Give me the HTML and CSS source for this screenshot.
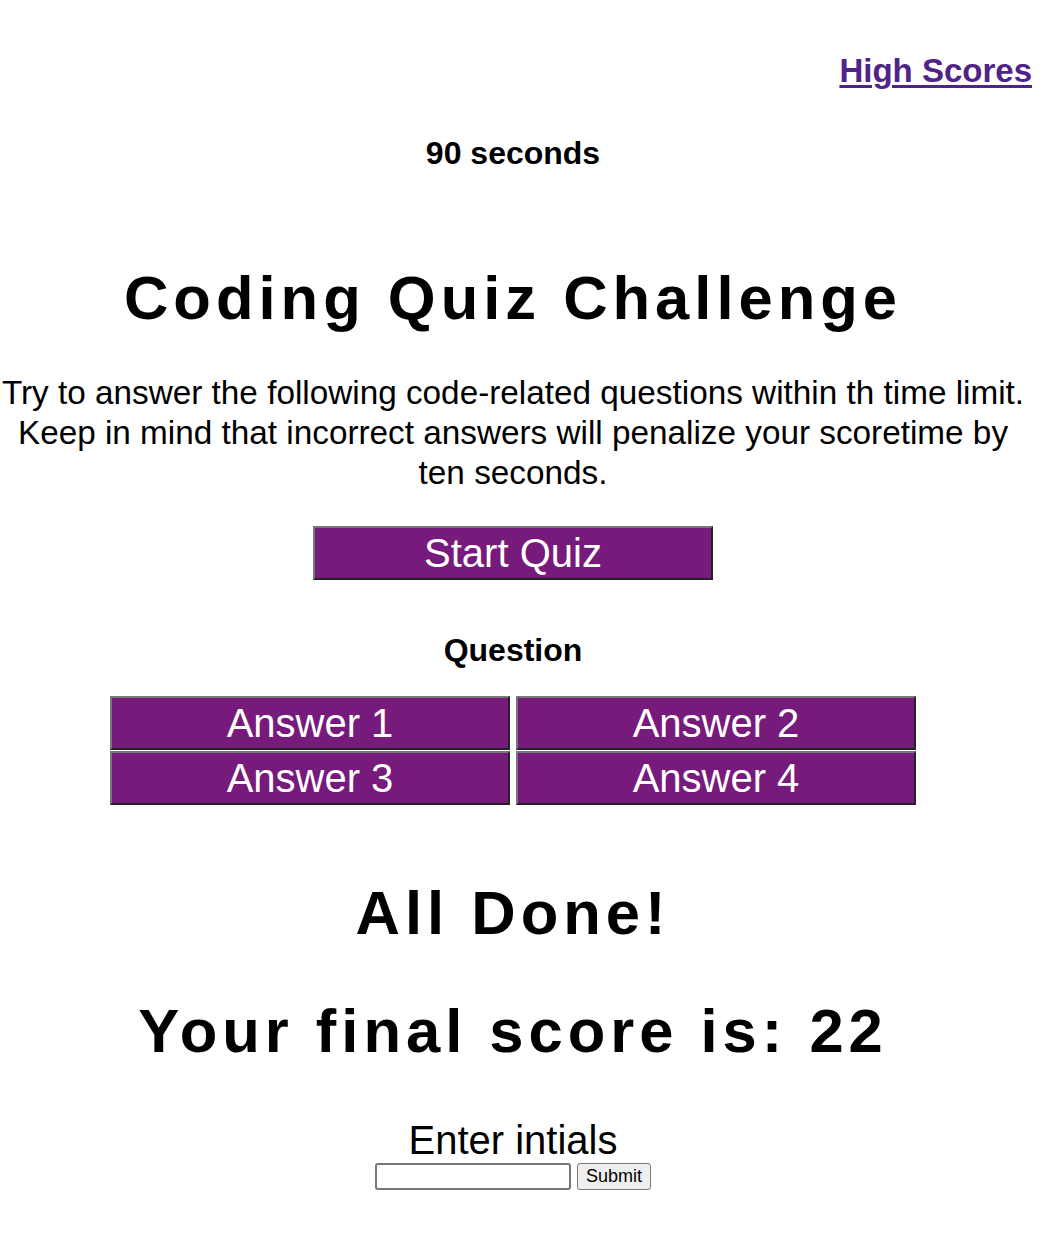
FILE: index.html
```html
<!DOCTYPE html>
<html>
<head>
<meta charset="utf-8">
<link rel="stylesheet" href="styles.css">
</head>
<body>
<main class="page">
  <header class="topbar">
    <a class="scores-link" href="#">High Scores</a>
  </header>
  <div class="timer">90 seconds</div>
  <section class="intro">
    <h1 class="title">Coding Quiz Challenge</h1>
    <p class="desc">Try to answer the following code-related questions within th time limit. Keep in mind that incorrect answers will penalize your scoretime by ten seconds.</p>
    <button class="btn start-btn">Start Quiz</button>
  </section>
  <section class="quiz">
    <div class="question">Question</div>
    <div class="answers">
      <button class="btn answer-btn">Answer 1</button>
      <button class="btn answer-btn">Answer 2</button>
      <button class="btn answer-btn">Answer 3</button>
      <button class="btn answer-btn">Answer 4</button>
    </div>
  </section>
  <section class="done">
    <h2 class="big">All Done!</h2>
    <h2 class="big score">Your final score is: 22</h2>
    <div class="initials-label">Enter intials</div>
    <form class="initials-form">
      <input class="initials-input" type="text">
      <button class="submit-btn" type="button">Submit</button>
    </form>
  </section>
</main>
</body>
</html>
```
FILE: styles.css
```css
html, body {
  margin: 0;
  padding: 0;
  background: #ffffff;
}
body {
  font-family: "Liberation Sans", Arial, sans-serif;
  color: #000;
}
.page {
  width: 1026px;
  display: flex;
  flex-direction: column;
  align-items: center;
  text-align: center;
}
.topbar {
  align-self: stretch;
  display: flex;
  justify-content: flex-end;
  padding-top: 52px;
  margin-right: -6px;
}
.scores-link {
  font-size: 33px;
  font-weight: bold;
  color: #4f2387;
  text-decoration: underline;
  text-underline-offset: 3px;
  text-decoration-thickness: 3px;
}
.timer {
  margin-top: 45px;
  font-size: 32px;
  font-weight: bold;
}
.intro {
  display: flex;
  flex-direction: column;
  align-items: center;
}
.title {
  margin: 91px 0 0;
  font-size: 61.5px;
  font-weight: bold;
  letter-spacing: 5px;
  line-height: 70px;
}
.desc {
  margin: 40px 0 0;
  font-size: 33.3px;
  line-height: 40px;
}
.btn {
  font-family: "Liberation Sans", Arial, sans-serif;
  background: #761a7b;
  color: #fff;
  border: 2px solid;
  border-top-color: #777;
  border-left-color: #777;
  border-right-color: #222;
  border-bottom-color: #222;
  width: 400px;
  padding: 0;
  cursor: pointer;
}
.start-btn {
  margin-top: 33px;
  font-size: 40px;
  height: 54px;
}
.quiz {
  display: flex;
  flex-direction: column;
  align-items: center;
}
.question {
  margin-top: 52px;
  font-size: 32px;
  font-weight: bold;
}
.answers {
  margin-top: 27px;
  display: grid;
  grid-template-columns: 400px 400px;
  column-gap: 6px;
  row-gap: 1px;
}
.answer-btn {
  font-size: 40px;
  height: 54px;
}
.done {
  display: flex;
  flex-direction: column;
  align-items: center;
}
.big {
  margin: 0;
  font-size: 61.5px;
  font-weight: bold;
  letter-spacing: 5px;
  line-height: 70px;
}
.done .big:first-child {
  margin-top: 73px;
}
.score {
  margin-top: 48px;
}
.initials-label {
  margin-top: 52px;
  font-size: 40px;
  line-height: 44px;
}
.initials-form {
  display: flex;
  gap: 6px;
  align-items: center;
  margin-top: 1px;
}
.initials-input {
  width: 190px;
  height: 23px;
  border: 2px solid #767676;
  border-radius: 3px;
  padding: 0 1px;
  margin: 0;
}
.submit-btn {
  font-family: "Liberation Sans", Arial, sans-serif;
  font-size: 18px;
  height: 27px;
  padding: 0 8px;
  background: #efefef;
  border: 1px solid #767676;
  border-radius: 3px;
  color: #000;
}
```
